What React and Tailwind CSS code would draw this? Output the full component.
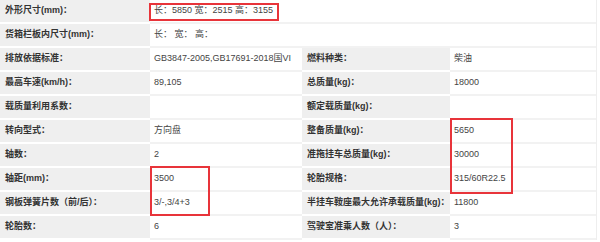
const rows = [
  { l1: '外形尺寸(mm)：', v1: '长：5850 宽：2515 高：3155', full: true },
  { l1: '货箱栏板内尺寸(mm)：', v1: '长： 宽： 高：', full: true },
  { l1: '排放依据标准：', v1: 'GB3847-2005,GB17691-2018国VI', l2: '燃料种类：', v2: '柴油' },
  { l1: '最高车速(km/h)：', v1: '89,105', l2: '总质量(kg)：', v2: '18000' },
  { l1: '载质量利用系数：', v1: '', l2: '额定载质量(kg)：', v2: '' },
  { l1: '转向型式：', v1: '方向盘', l2: '整备质量(kg)：', v2: '5650' },
  { l1: '轴数：', v1: '2', l2: '准拖挂车总质量(kg)：', v2: '30000' },
  { l1: '轴距(mm)：', v1: '3500', l2: '轮胎规格：', v2: '315/60R22.5' },
  { l1: '钢板弹簧片数（前/后）：', v1: '3/-,3/4+3', l2: '半挂车鞍座最大允许承载质量(kg)：', v2: '11800' },
  { l1: '轮胎数：', v1: '6', l2: '驾驶室准乘人数（人）：', v2: '3' },
]

const label = 'bg-[#efefef] border-b-2 border-white pl-[5px] flex items-center font-bold text-[#333] whitespace-nowrap'
const value = 'bg-white border-b-2 border-[#f2f2f2] pl-[4px] flex items-center text-[#444] whitespace-nowrap'

export default function App() {
  return (
    <div className="relative w-[600px] h-[242px] bg-white overflow-hidden text-[9px] font-['Liberation_Sans','Noto_Sans_CJK_SC',sans-serif]">
      <div className="flex flex-col w-[597px] border-r border-[#eee]">
        {rows.map((r, i) => (
          <div key={i} className="flex h-[24px]">
            <div className={label + ' w-[150px]'}>{r.l1}</div>
            {r.full ? (
              <div className={value + ' flex-1'}>{r.v1}</div>
            ) : (
              <>
                <div className={value + ' w-[152px]'}>{r.v1}</div>
                <div className={label + ' w-[148px] pl-[2px]'}>{r.l2}</div>
                <div className={value + ' flex-1'}>{r.v2}</div>
              </>
            )}
          </div>
        ))}
      </div>

      {/* red highlight boxes */}
      <div className="absolute left-[149px] top-[3px] w-[130px] h-[18px] border-2 border-[#e8343a]" />
      <div className="absolute left-[450px] top-[118px] w-[63px] h-[76px] border-2 border-[#e8343a]" />
      <div className="absolute left-[150px] top-[166px] w-[60px] h-[50px] border-2 border-[#e8343a]" />
    </div>
  )
}
